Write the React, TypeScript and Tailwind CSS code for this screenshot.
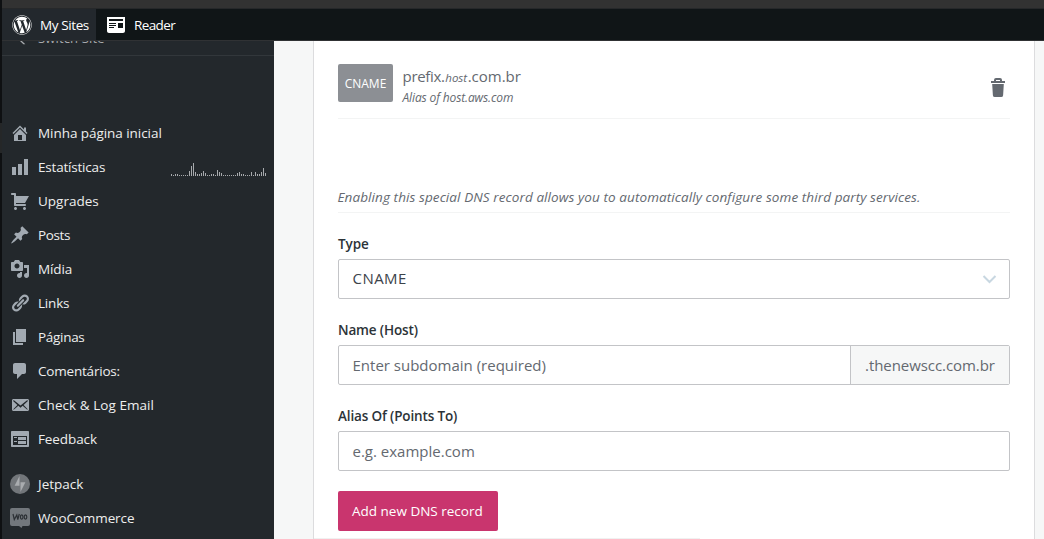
import type { ReactNode } from "react";
import { FaWordpress } from "react-icons/fa";

const menu: { label: string; d: string; track: string }[] = [
  { label: "Minha página inicial", track: "tracking-[-0.05px]", d: "M16 8.5l1.53 1.53-1.06 1.06L10 4.6l-6.47 6.49-1.06-1.06L10 2.5l4 4v-2h2v4zm-6-2.46l6 5.99V18H4v-5.97zM12 17v-5H8v5h4z" },
  { label: "Estatísticas", track: "tracking-[-0.2px]", d: "M18 18V2h-4v16h4zm-6 0V7H8v11h4zm-6 0v-8H2v8h4z" },
  { label: "Upgrades", track: "tracking-[0px]", d: "M6 13h9c.55 0 1 .45 1 1s-.45 1-1 1H5c-.55 0-1-.45-1-1V4H2c-.55 0-1-.45-1-1s.45-1 1-1h3c.55 0 1 .45 1 1v2h13l-4 7H6v1zm-.5 3c.83 0 1.5.67 1.5 1.5S6.33 19 5.5 19 4 18.33 4 17.5 4.67 16 5.5 16zm9 0c.83 0 1.5.67 1.5 1.5s-.67 1.5-1.5 1.5-1.5-.67-1.5-1.5.67-1.5 1.5-1.5z" },
  { label: "Posts", track: "tracking-[-0.4px]", d: "M10.44 3.02l1.82-1.82 6.36 6.35-1.83 1.82c-1.05-.68-2.48-.57-3.41.36l-.75.75c-.92.93-1.04 2.35-.35 3.41l-1.83 1.82-2.41-2.41-2.8 2.79c-.42.42-3.38 2.71-3.8 2.29s1.86-3.39 2.28-3.81l2.79-2.79L4.1 9.36l1.83-1.82c1.05.69 2.48.57 3.4-.36l.75-.75c.93-.92 1.05-2.35.36-3.41z" },
  { label: "Mídia", track: "tracking-[-0.1px]", d: "M13 11V4c0-.55-.45-1-1-1h-1.67L9 1H5L3.67 3H2c-.55 0-1 .45-1 1v7c0 .55.45 1 1 1h10c.55 0 1-.45 1-1zM7 4.5c1.38 0 2.5 1.12 2.5 2.5S8.38 9.5 7 9.5 4.5 8.38 4.5 7 5.62 4.5 7 4.5zM14 6h5v10.5c0 1.38-1.12 2.5-2.5 2.5S14 17.88 14 16.5s1.12-2.5 2.5-2.5c.17 0 .34.02.5.05V9h-3V6zm-4 8.05V13h2v3.5c0 1.38-1.12 2.5-2.5 2.5S7 17.88 7 16.5 8.12 14 9.5 14c.17 0 .34.02.5.05z" },
  { label: "Links", track: "tracking-[-0.2px]", d: "M17.74 2.76c1.68 1.69 1.68 4.41 0 6.1l-1.53 1.52c-1.12 1.12-2.7 1.47-4.14 1.09l2.62-2.61.76-.77.76-.76c.84-.84.84-2.2 0-3.04-.84-.85-2.2-.85-3.04 0l-.77.76-3.38 3.38c-.37-1.44-.02-3.02 1.1-4.14l1.52-1.53c1.69-1.68 4.42-1.68 6.1 0zM8.59 13.43l5.34-5.34c.42-.42.42-1.1 0-1.52-.44-.43-1.13-.39-1.53 0l-5.33 5.34c-.42.42-.42 1.1 0 1.52.44.43 1.13.39 1.52 0zm-.76 2.29l4.14-4.15c.38 1.44.03 3.02-1.09 4.14l-1.52 1.53c-1.69 1.68-4.41 1.68-6.1 0-1.68-1.68-1.68-4.42 0-6.1l1.53-1.52c1.12-1.12 2.7-1.47 4.14-1.1l-4.14 4.15c-.85.84-.85 2.2 0 3.05.84.84 2.2.84 3.04 0z" },
  { label: "Páginas", track: "tracking-[-0.3px]", d: "M6 15V2h10v13H6zm-1 1h8v2H3V5h2v11z" },
  { label: "Comentários:", track: "tracking-[-0.2px]", d: "M5 2h9c1.1 0 2 .9 2 2v7c0 1.1-.9 2-2 2h-2l-5 5v-5H5c-1.1 0-2-.9-2-2V4c0-1.1.9-2 2-2z" },
  { label: "Check & Log Email", track: "tracking-[0.05px]", d: "M19 14.5v-9c0-.83-.67-1.5-1.5-1.5H3.49c-.83 0-1.5.67-1.5 1.5v9c0 .83.67 1.5 1.5 1.5H17.5c.83 0 1.5-.67 1.5-1.5zm-1.31-9.11c.33.33.15.67-.03.84L13.6 9.95l3.9 4.06c.12.14.2.36.06.51-.13.16-.43.15-.56.05l-4.37-3.73-2.14 1.95-2.13-1.95-4.37 3.73c-.13.1-.43.11-.56-.05-.14-.15-.06-.37.06-.51l3.9-4.06-4.06-3.72c-.18-.17-.36-.51-.03-.84s.67-.17.95.07l6.24 5.04 6.25-5.04c.28-.24.62-.4.95-.07z" },
  { label: "Feedback", track: "tracking-[-0.1px]", d: "M2 2h16c.55 0 1 .45 1 1v14c0 .55-.45 1-1 1H2c-.55 0-1-.45-1-1V3c0-.55.45-1 1-1zm15 14V7H3v9h14zM4 8v1h3V8H4zm4 0v3h8V8H8zm-4 4v1h3v-1H4zm4 0v3h8v-3H8z" },
];

const stats = [2, 1, 2, 2, 1, 1, 1, 1, 1, 5, 10, 13, 4, 2, 2, 3, 5, 3, 1, 1, 2, 2, 1, 6, 4, 3, 1, 1, 1, 1, 1, 1, 1, 3, 4, 2, 2, 1, 1, 1, 4, 1, 4, 2, 2, 4, 8, 3];

function Row({ icon, label, track, children }: { icon: ReactNode; label: string; track: string; children?: ReactNode }) {
  return (
    <a className="flex h-[34px] items-center pl-2">
      <span className="flex w-5 shrink-0 justify-center text-[#a2aab2]">{icon}</span>
      <span className={"ml-2 text-[13.5px] font-medium whitespace-nowrap text-[#eeeeee] " + track}>{label}</span>
      {children}
    </a>
  );
}

function Sparkline() {
  return (
    <svg className="mr-[7px] ml-auto h-4 w-24 translate-y-[2px]" viewBox="0 0 96 16" fill="#a7aaad">
      {stats.map((h, i) => (
        <rect key={i} x={i * 2} y={16 - h - 1} width="1" height={h} shapeRendering="crispEdges" />
      ))}
    </svg>
  );
}

function Label({ children, track }: { children: string; track: string }) {
  return <label className={"block h-5 text-[13.5px] leading-5 font-semibold text-[#2c3338] " + track}>{children}</label>;
}

export default function App() {
  return (
    <div className="flex h-[539px] w-[1044px] overflow-hidden bg-[#0e1012] font-['Open_Sans','Noto_Sans',sans-serif]">
      <div className="w-[2px] shrink-0 pt-[123px]">
        <div className="h-[30px] bg-[#252728]" />
      </div>
      <div className="flex min-w-0 flex-1 flex-col">
        <div className="h-2 shrink-0 bg-[#323232]" />
        <header className="flex h-[33px] shrink-0 items-stretch border-t border-b border-t-[#26282a] border-b-[#303234] bg-[#101517] text-[13.5px] font-medium text-white">
          <div className="flex w-[94px] items-center bg-[#23282d] pt-px pl-[10px]">
            <FaWordpress className="size-5" />
            <span className="ml-2 whitespace-nowrap tracking-[-0.4px]">My Sites</span>
          </div>
          <div className="flex items-center pt-px pl-2">
            <svg className="size-6" viewBox="0 0 24 24" fill="currentColor">
              <path d="M3 4v14c0 1.1.9 2 2 2h14c1.1 0 2-.9 2-2V4H3zm7 11H5v-1h5v1zm2-2H5v-1h7v1zm0-2H5v-1h7v1zm7 4h-5v-5h5v5zm0-7H5V6h14v2z" />
            </svg>
            <span className="ml-[6px] tracking-[-0.6px]">Reader</span>
          </div>
        </header>

        <div className="flex min-h-0 flex-1">
          <aside className="flex w-[272px] shrink-0 flex-col bg-[#23282c]">
            <div className="flex h-[15px] shrink-0 items-end overflow-hidden border-b border-[#32373b]">
              <div className="flex h-[32px] items-center pl-3 text-[#a7aaad]">
                <svg className="size-4" viewBox="0 0 24 24" fill="currentColor">
                  <path d="M14 20l-8-8 8-8 1.4 1.4L8.8 12l8.2 8z" />
                </svg>
                <span className="ml-2 text-[13px] tracking-[0.15px]">Switch Site</span>
              </div>
            </div>
            <nav className="pt-[60px]">
              {menu.map((m) => (
                <Row
                  key={m.label}
                  label={m.label}
                  track={m.track}
                  icon={
                    <svg className="size-5" viewBox="0 0 20 20" fill="currentColor" fillRule="evenodd">
                      <path d={m.d} />
                    </svg>
                  }
                >
                  {m.label === "Estatísticas" && <Sparkline />}
                </Row>
              ))}
              <div className="h-[11px]" />
              <Row
                label="Jetpack"
                track="tracking-[0px]"
                icon={
                  <svg className="size-5" viewBox="0 0 20 20">
                    <circle cx="10" cy="10" r="10" fill="#72767a" />
                    <path d="M9.5 2v9.700H4.600z M10.500 18V8.300H15.400z" fill="#a9acaf" />
                  </svg>
                }
              />
              <Row
                label="WooCommerce"
                track="tracking-[-0.1px]"
                icon={
                  <svg className="size-5" viewBox="0 0 20 20">
                    <path d="M2 0h16a2 2 0 012 2v14a2 2 0 01-2 2h-5.500l-1 2-2.500-2H2a2 2 0 01-2-2V2a2 2 0 012-2z" fill="#72777c" />
                    <path d="M3 6l1.300 5.500L6.800 7l1 4.500L9.300 6" fill="none" stroke="#2c3035" strokeWidth="1.200" />
                    <ellipse cx="11.700" cy="9" rx="1.300" ry="2.100" fill="none" stroke="#2c3035" strokeWidth="1.200" />
                    <ellipse cx="15.500" cy="9" rx="1.300" ry="2.100" fill="none" stroke="#2c3035" strokeWidth="1.200" />
                  </svg>
                }
              />
            </nav>
          </aside>

          <main className="flex flex-1 bg-[#f6f7f7] pr-[9px] pl-[39px]">
            <section className="flex flex-1 flex-col border-x border-[#dcdcde] bg-white px-6">
              <div className="flex h-[78px] shrink-0 items-start border-b border-[#f3f4f4] pt-[23px]">
                <div className="flex h-[38px] w-[55px] items-center justify-center rounded-[2px] bg-[#8c8f94] pt-px text-[12px] text-white">
                  <span className="tracking-[0px]">CNAME</span>
                </div>
                <div className="ml-[9.5px] text-[#646970]">
                  <div className="flex h-6 items-baseline text-[15px] leading-6 whitespace-nowrap">
                    <span className="tracking-[-0.3px]">prefix.</span>
                    <em className="mx-[0.5px] text-[11.5px] tracking-[0px]">host</em>
                    <span className="tracking-[0px]">.com.br</span>
                  </div>
                  <em className="block h-5 text-[12px] leading-5 tracking-[-0.13px]">Alias of host.aws.com</em>
                </div>
                <svg className="mt-3 ml-auto size-6" viewBox="0 0 24 24" fill="#646970">
                  <path d="M6.187 8h11.625l-.695 11.125A2 2 0 0115.120 21H8.880a2 2 0 01-1.995-1.875L6.187 8zM19 5v2H5V5h3V4a2 2 0 012-2h4a2 2 0 012 2v1h3zm-9 0h4V4h-4v1z" />
                </svg>
              </div>
              <p className="flex h-[94px] shrink-0 items-end border-b border-[#f3f4f4] pb-[5px] text-[13.5px] leading-5 whitespace-nowrap text-[#646970] italic">
                <span className="-ml-[0.5px] tracking-[0.09px]">Enabling this special DNS record allows you to automatically configure some third party services.</span>
              </p>

              <div className="mt-[21px]">
                <Label track="tracking-[-0.1px]">Type</Label>
                <div className="mt-[5px] flex h-10 items-center justify-between rounded-[2px] border border-[#c3c4c7] pr-[7px] pl-[13.5px] text-[15px] text-[#3c434a]">
                  <span className="-mt-px tracking-[0.45px]">CNAME</span>
                  <svg className="size-6" viewBox="0 0 24 24" fill="none" stroke="#c8d7e1" strokeWidth="2">
                    <path d="M5.500 9l6 6 6-6" />
                  </svg>
                </div>
              </div>

              <div className="mt-[21px]">
                <Label track="tracking-[-0.15px]">Name (Host)</Label>
                <div className="mt-[5px] flex h-10 items-stretch rounded-[2px] border border-[#c3c4c7] text-[15px] text-[#646970]">
                  <div className="flex flex-1 items-center pl-[13.5px]">
                    <span className="tracking-[0px]">Enter subdomain (required)</span>
                  </div>
                  <div className="flex w-[159px] items-center border-l border-[#c3c4c7] bg-[#f6f7f7] pl-[14px]">
                    <span className="tracking-[-0.06px]">.thenewscc.com.br</span>
                  </div>
                </div>
              </div>

              <div className="mt-[21px]">
                <Label track="tracking-[-0.15px]">Alias Of (Points To)</Label>
                <div className="mt-[5px] flex h-10 items-center rounded-[2px] border border-[#c3c4c7] pl-[13.5px] text-[15px] text-[#646970]">
                  <span className="tracking-[0px]">e.g. example.com</span>
                </div>
              </div>

              <button className="mt-5 flex h-10 w-40 shrink-0 items-center rounded-[2px] bg-[#c9356e] pl-[14px] text-[13.5px] font-medium whitespace-nowrap text-white">
                <span className="tracking-[0px]">Add new DNS record</span>
              </button>
              <div className="mt-[7px] -ml-6 h-px w-[386px] bg-[#f0f1f1]" />
            </section>
          </main>
        </div>
      </div>
    </div>
  );
}
